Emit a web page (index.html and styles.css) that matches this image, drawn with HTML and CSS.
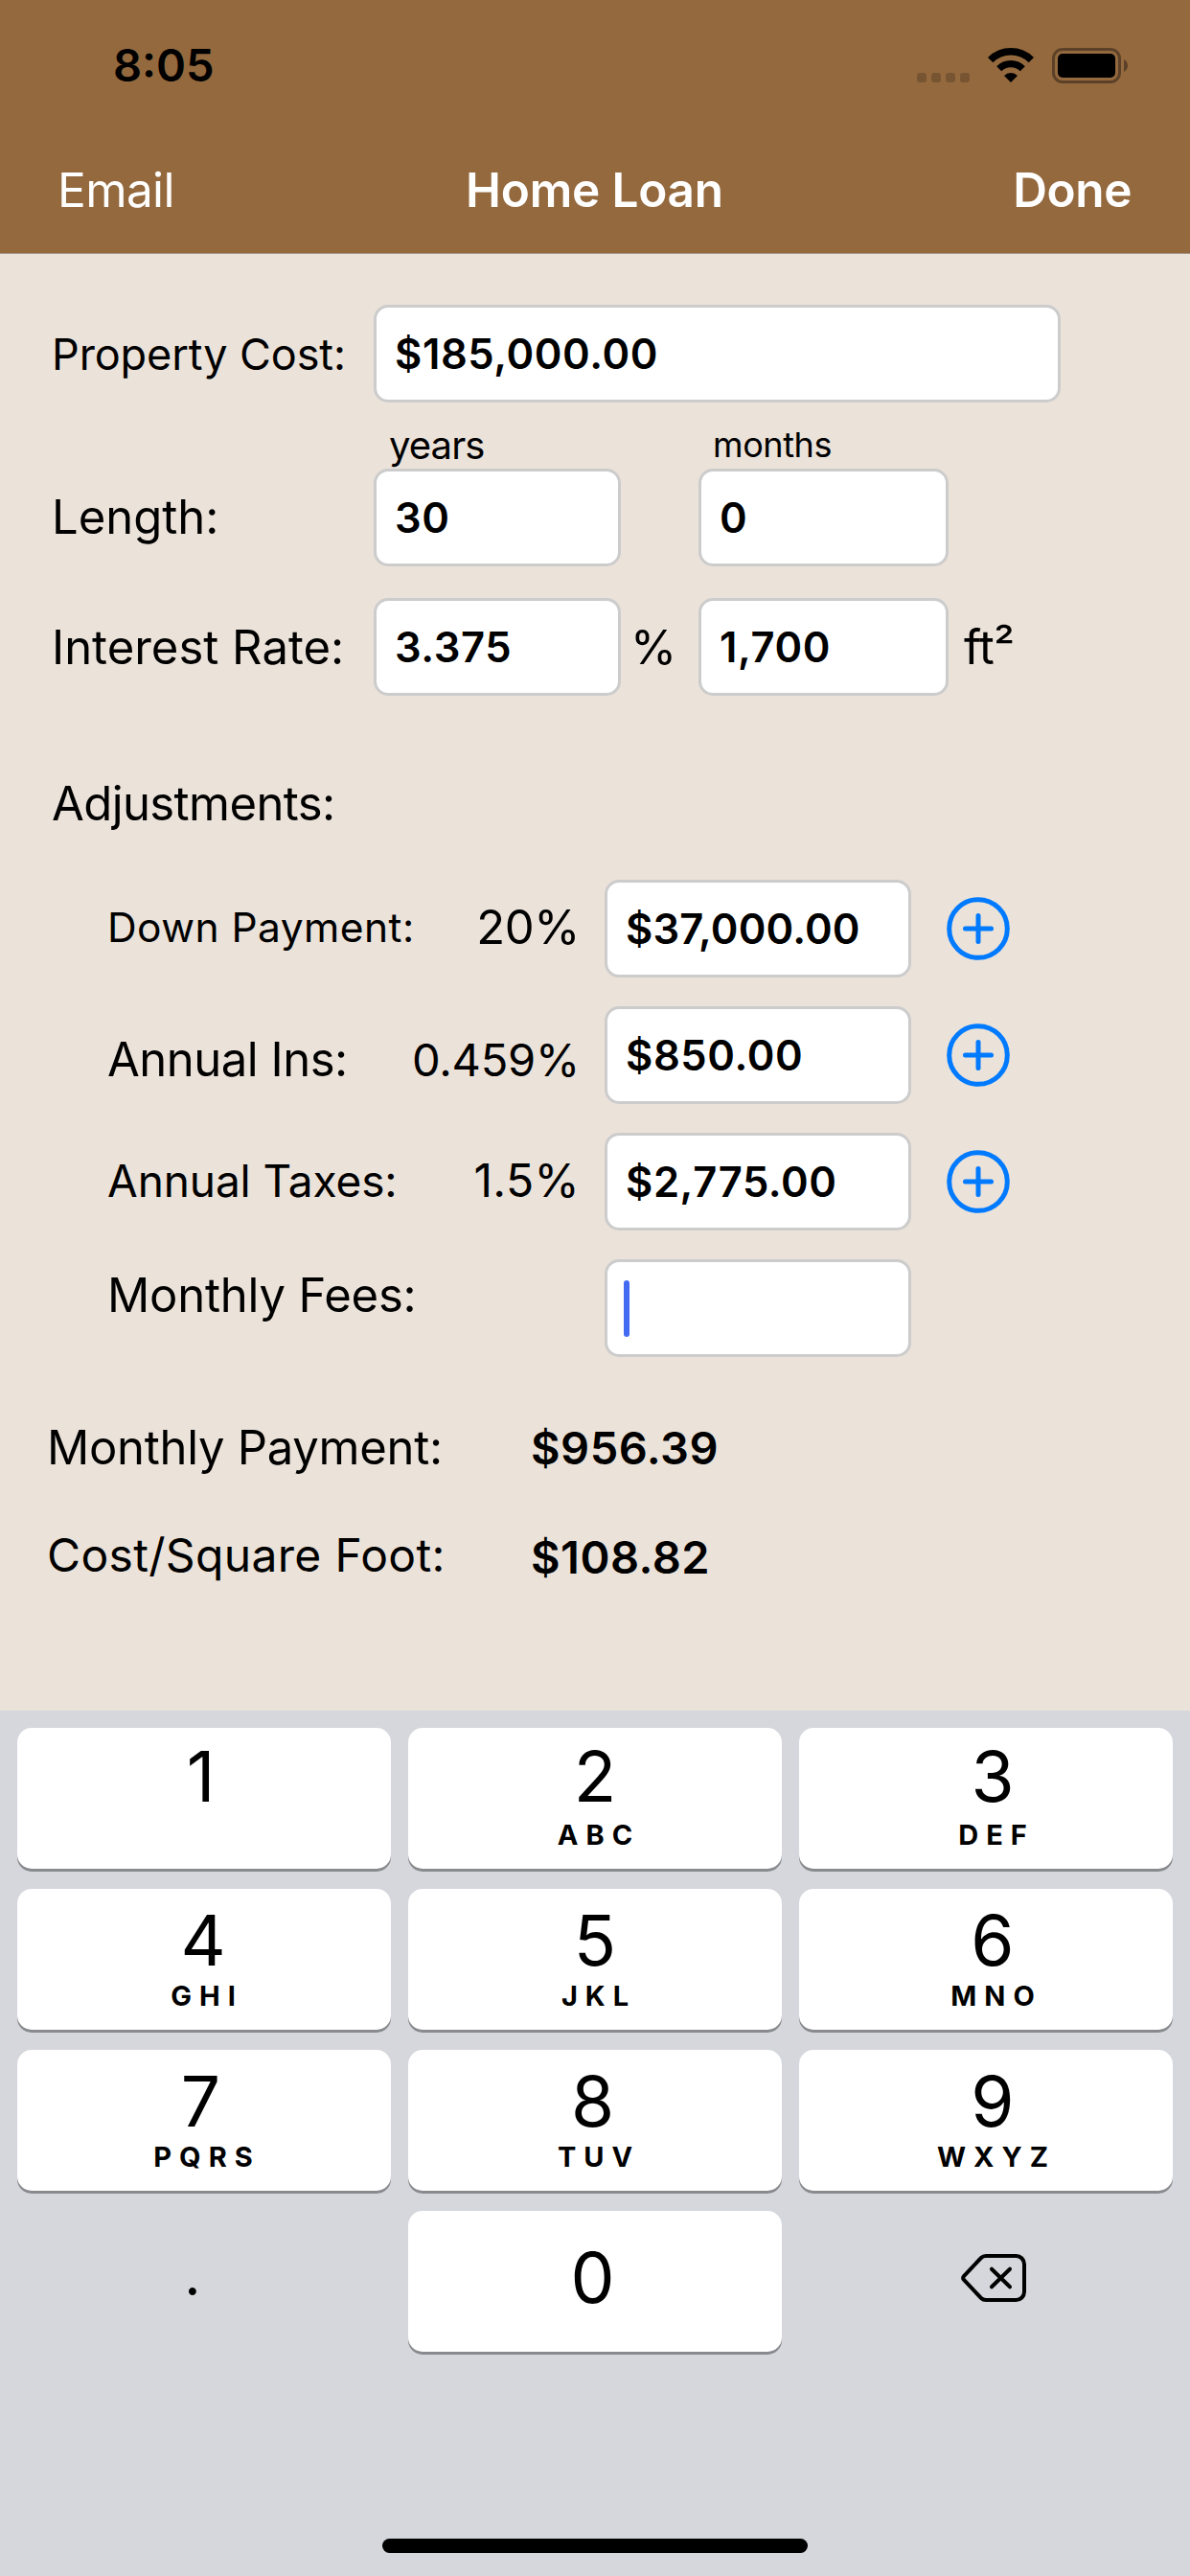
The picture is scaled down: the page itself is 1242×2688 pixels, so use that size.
FILE: index.html
```
<!DOCTYPE html>
<html lang="en">
<head>
    <meta charset="UTF-8">
    <meta name="viewport" content="width=device-width, initial-scale=1.0">
    <title>Home Loan</title>
    <link rel="stylesheet" href="styles.css">
</head>
<body>
    <header class="header">
        <div class="status-bar">
            <span class="time">8:05</span>
            <div class="status-icons">
                <svg class="signal" width="55" height="37" viewBox="0 0 55 37">
                    <rect x="0" y="26" width="10" height="10" rx="3"/>
                    <rect x="15" y="26" width="10" height="10" rx="3"/>
                    <rect x="30" y="26" width="10" height="10" rx="3"/>
                    <rect x="45" y="26" width="10" height="10" rx="3"/>
                </svg>
                <svg width="48" height="37" viewBox="0 0 48 37">
                    <path d="M2.65 12.65A30.2 30.2 0 0 1 45.35 12.65" fill="none" stroke="#000" stroke-width="7.6"/>
                    <path d="M11.7 21.7A17.4 17.4 0 0 1 36.3 21.7" fill="none" stroke="#000" stroke-width="7.2"/>
                    <path d="M24 36L17 29A9.8 9.8 0 0 1 31 29Z"/>
                </svg>
                <svg width="79" height="37" viewBox="0 0 79 37">
                    <rect x="1.5" y="1.5" width="69" height="34" rx="9.5" fill="none" stroke="#5c4128" stroke-width="3"/>
                    <rect x="6" y="6" width="60" height="25" rx="5"/>
                    <path d="M75 12C80.3 14.5 80.3 22.5 75 25Z" fill="#5c4128"/>
                </svg>
            </div>
        </div>
        <nav class="nav">
            <span class="nav-email">Email</span>
            <span class="nav-title">Home Loan</span>
            <span class="nav-done">Done</span>
        </nav>
    </header>

    <main class="form">
        <div class="loan">
            <label class="label-cost">Property Cost:</label>
            <input class="field field-wide" type="text" value="$185,000.00">

            <span class="unit unit-years">years</span>
            <span class="unit unit-months">months</span>

            <label>Length:</label>
            <input class="field" type="text" value="30">
            <input class="field field-second" type="text" value="0">

            <label class="label-rate">Interest Rate:</label>
            <input class="field field-rate" type="text" value="3.375">
            <span class="percent">%</span>
            <input class="field field-rate" type="text" value="1,700">
            <span class="area">ft²</span>
        </div>

        <h2 class="section-title">Adjustments:</h2>

        <div class="adjustments">
            <div class="adjust-row">
                <label class="label-down">Down Payment:</label>
                <span class="rate">20%</span>
                <input class="field tight" type="text" value="$37,000.00">
                <svg class="add" viewBox="0 0 66 66">
                    <circle cx="33" cy="33" r="30.3"/>
                    <path d="M33 19.5V46.5M19.5 33H46.5"/>
                </svg>
            </div>
            <div class="adjust-row">
                <label class="label-ins">Annual Ins:</label>
                <span class="rate rate-ins">0.459%</span>
                <input class="field" type="text" value="$850.00">
                <svg class="add" viewBox="0 0 66 66">
                    <circle cx="33" cy="33" r="30.3"/>
                    <path d="M33 19.5V46.5M19.5 33H46.5"/>
                </svg>
            </div>
            <div class="adjust-row">
                <label class="label-taxes">Annual Taxes:</label>
                <span class="rate rate-taxes">1.5%</span>
                <input class="field" type="text" value="$2,775.00">
                <svg class="add" viewBox="0 0 66 66">
                    <circle cx="33" cy="33" r="30.3"/>
                    <path d="M33 19.5V46.5M19.5 33H46.5"/>
                </svg>
            </div>
            <div class="adjust-row">
                <label class="label-fees">Monthly Fees:</label>
                <span class="rate"></span>
                <div class="field field-active"><span class="caret"></span></div>
            </div>
        </div>

        <div class="results">
            <span class="result-label">Monthly Payment:</span>
            <span class="result-value">$956.39</span>
            <span class="result-label label-foot">Cost/Square Foot:</span>
            <span class="result-value value-foot">$108.82</span>
        </div>
    </main>

    <section class="keyboard">
        <div class="keys">
            <div class="key top left"><span class="digit narrow">1</span></div>
            <div class="key top"><span class="digit">2</span><span class="letters">ABC</span></div>
            <div class="key top right"><span class="digit">3</span><span class="letters">DEF</span></div>
            <div class="key left"><span class="digit">4</span><span class="letters">GHI</span></div>
            <div class="key"><span class="digit">5</span><span class="letters">JKL</span></div>
            <div class="key right"><span class="digit">6</span><span class="letters">MNO</span></div>
            <div class="key left"><span class="digit narrow">7</span><span class="letters">PQRS</span></div>
            <div class="key"><span class="digit narrow">8</span><span class="letters">TUV</span></div>
            <div class="key right"><span class="digit">9</span><span class="letters">WXYZ</span></div>
            <div class="key plain"><span class="dot">.</span></div>
            <div class="key zero"><span class="digit narrow">0</span></div>
            <div class="key plain delete">
                <svg width="70" height="52" viewBox="0 0 70 52">
                    <path d="M27 3H58.5a8.5 8.5 0 0 1 8.5 8.5V40.5a8.5 8.5 0 0 1-8.5 8.5H27q-3 0-5-2L4 28q-1.7-2 0-4L22 5q2-2 5-2z"/>
                    <path d="M33 16.7L52 35.3M52 16.7L33 35.3"/>
                </svg>
            </div>
        </div>
        <div class="home-indicator"></div>
    </section>
</body>
</html>
```
FILE: styles.css
```
* {
    box-sizing: border-box;
}

body {
    margin: 0;
    width: 1242px;
    height: 2688px;
    display: flex;
    flex-direction: column;
    font-family: Inter, Roboto, sans-serif;
    font-size: 49px;
    line-height: 60px;
    color: #000;
    background-color: #ebe2d9;
    overflow: hidden;
}

svg {
    display: block;
}

/* header */
.header {
    height: 265px;
    background-color: #94693e;
    border-bottom: 1px solid #a2968a;
}

.status-bar {
    display: flex;
    justify-content: space-between;
    align-items: center;
    height: 136px;
    padding: 0 65px 0 118px;
}

.time {
    font-size: 47px;
    font-weight: 600;
}

.status-icons {
    display: flex;
    gap: 19px;
}

.signal {
    fill: #785532;
}

.nav {
    display: grid;
    grid-template-columns: 1fr auto 1fr;
    align-items: center;
    height: 124px;
    padding: 0 61px 0 60px;
    font-size: 49.5px;
    color: #fff;
}

.nav-email {
    letter-spacing: -0.6px;
}

.nav-title {
    font-weight: 600;
    letter-spacing: -0.2px;
}

.nav-done {
    font-weight: 600;
    letter-spacing: -0.4px;
    text-align: right;
}

/* form */
.form {
    height: 1520px;
    padding-top: 53px;
}

.field {
    display: flex;
    align-items: center;
    width: 100%;
    height: 102px;
    margin: 0;
    padding: 0 19px;
    border: 3px solid #ccc;
    border-radius: 15px;
    background-color: #fff;
    font-family: inherit;
    font-size: 43.5px;
    font-weight: 600;
    letter-spacing: 0.6px;
    color: #000;
    outline: none;
}

.field.tight {
    letter-spacing: 0.15px;
}

.loan {
    display: grid;
    grid-template-columns: 336px 258px 81px 261px 1fr;
    grid-template-rows: 102px 69px 102px 135px;
    align-items: center;
    padding-left: 54px;
}

.loan label {
    grid-column: 1;
}

.field-wide {
    grid-column: 2 / -1;
    width: 717px;
}

.label-cost {
    padding-top: 2px;
    font-size: 45px;
    letter-spacing: -0.1px;
}

.unit {
    padding-top: 20px;
    line-height: 49px;
}

.unit-years {
    grid-column: 2;
    padding-left: 16px;
    font-size: 40px;
    letter-spacing: -0.9px;
}

.unit-months {
    grid-column: 4;
    padding-left: 15px;
    font-size: 36px;
    letter-spacing: -0.4px;
}

.field-second {
    grid-column: 4;
}

.label-rate,
.field-rate,
.percent,
.area {
    align-self: end;
}

.label-rate,
.percent,
.area {
    line-height: 101px;
}

.percent {
    padding-left: 10px;
}

.area {
    padding-left: 16px;
    letter-spacing: -0.6px;
}

.section-title {
    margin: 83px 0 49px;
    padding-left: 54px;
    font-size: 49px;
    font-weight: 400;
    letter-spacing: -0.58px;
}

.adjustments {
    display: grid;
    gap: 30px;
    padding-left: 112px;
}

.adjust-row {
    display: grid;
    grid-template-columns: 313px 180px 320px 66px;
    align-items: center;
    height: 102px;
}

.adjust-row label {
    white-space: nowrap;
}

.adjust-row .field {
    margin-left: 26px;
}

.label-down {
    margin-top: -2px;
    font-size: 42.5px;
    letter-spacing: 0.45px;
}

.label-ins {
    margin-top: 10px;
    letter-spacing: -0.48px;
}

.label-taxes {
    margin-top: -2px;
    font-size: 46px;
    letter-spacing: -0.1px;
}

.label-fees {
    margin-top: -26px;
    letter-spacing: -0.2px;
}

.rate {
    margin-top: -2px;
    text-align: right;
    letter-spacing: -0.4px;
}

.rate-ins {
    margin-top: 10px;
    font-size: 47px;
    letter-spacing: -0.2px;
}

.rate-taxes {
    font-size: 48px;
    letter-spacing: 0.4px;
}

.add {
    width: 66px;
    height: 66px;
    margin-left: 63px;
    fill: none;
    stroke: #007aff;
    stroke-width: 5;
    stroke-linecap: round;
}

.field-active {
    padding-left: 17px;
}

.caret {
    width: 6px;
    height: 59px;
    border-radius: 3px;
    background-color: #426bf2;
}

.results {
    display: grid;
    grid-template-columns: 505px 1fr;
    row-gap: 52px;
    margin-top: 65px;
    padding-left: 49px;
}

.result-label {
    letter-spacing: -0.28px;
}

.label-foot {
    font-size: 48px;
    letter-spacing: 0.33px;
}

.result-value {
    font-size: 47px;
    font-weight: 600;
    letter-spacing: 0.5px;
}

.value-foot {
    padding-top: 2px;
}

/* number pad */
.keyboard {
    display: flex;
    flex-direction: column;
    flex: 1;
    padding: 18px 18px 24px;
    background-color: #d5d7dc;
}

.keys {
    display: grid;
    grid-template-columns: repeat(3, 390px);
    grid-auto-rows: 147px;
    gap: 21px 18px;
}

.key {
    display: flex;
    flex-direction: column;
    align-items: center;
    padding-top: 17px;
    border-radius: 15px;
    background-color: #fff;
    box-shadow: 0 3px 0 #898a8e;
}

.key.left {
    padding-right: 2px;
}

.key.right {
    padding-left: 14px;
}

.digit {
    font-size: 73px;
    line-height: 73px;
}

.digit.narrow {
    margin-right: 5px;
}

.letters {
    margin-top: 7px;
    padding-left: 8px;
    font-size: 29px;
    line-height: 30px;
    font-weight: 700;
    letter-spacing: 8px;
}

.key.top {
    padding-top: 14px;
}

.key.top .letters {
    margin-top: 10px;
}

.key.zero {
    padding-top: 33px;
}

.key.plain {
    background-color: transparent;
    box-shadow: none;
}

.dot {
    margin: 19px 24px 0 0;
    font-size: 60px;
}

.key.delete {
    padding: 44px 0 0 16px;
}

.delete svg {
    fill: none;
    stroke: #000;
    stroke-width: 4;
    stroke-linecap: round;
}

.home-indicator {
    width: 444px;
    height: 15px;
    margin: auto auto 0;
    border-radius: 8px;
    background-color: #000;
}
```
